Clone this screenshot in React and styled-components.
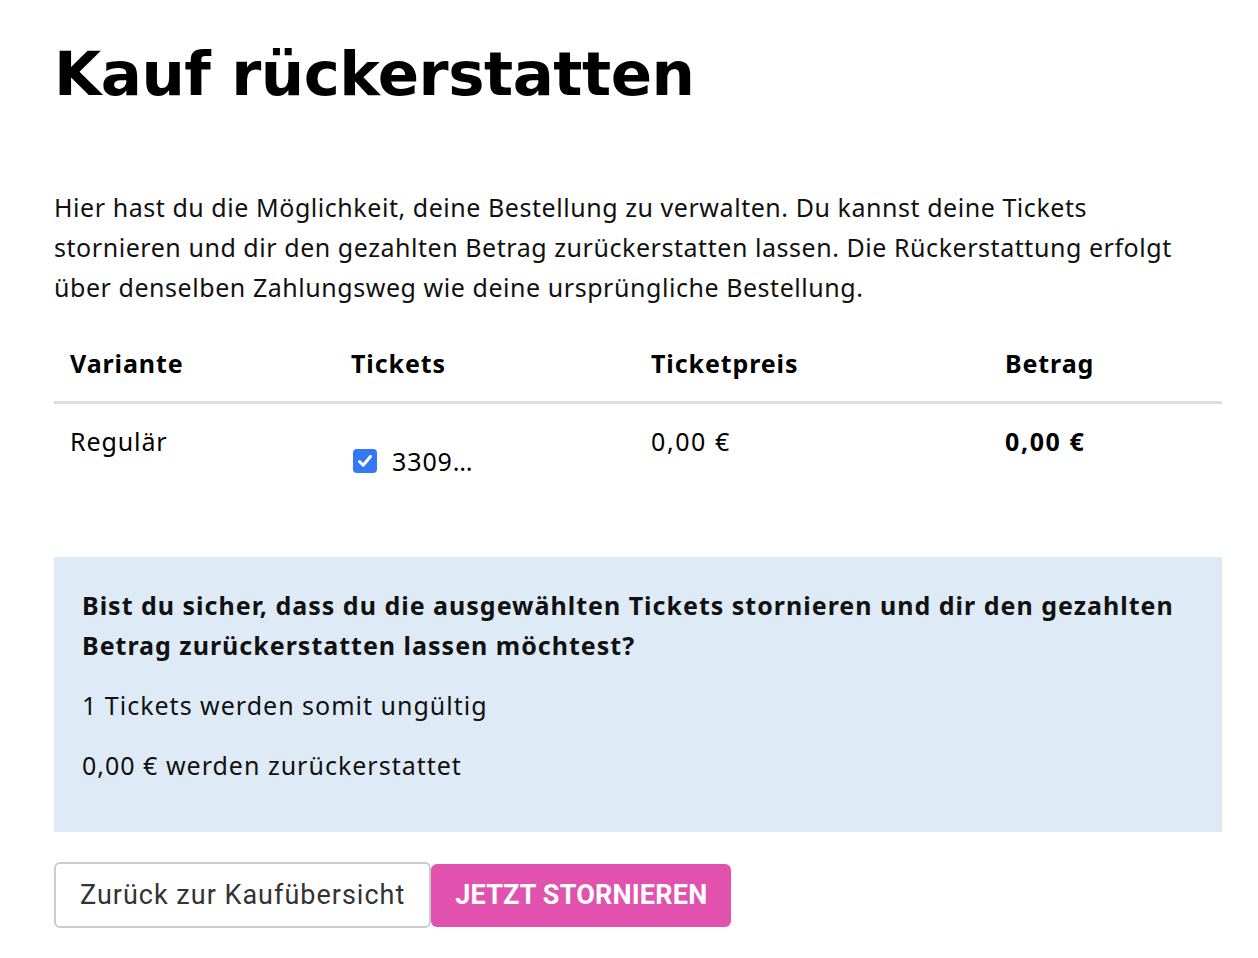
import React, { useState } from "react";
import styled, { createGlobalStyle } from "styled-components";

const Global = createGlobalStyle`
	body {
		margin: 0;
		background: #fff;
		font-family: "Noto Sans", "Lato", sans-serif;
		color: #111;
	}
`;

const Page = styled.div`
	padding: 30px 36px 40px 54px;
	max-width: 1168px;
`;

const Title = styled.h1`
	margin: 0 0 69px;
	font-family: "DejaVu Sans", "Liberation Sans", sans-serif;
	font-weight: 700;
	font-size: 61px;
	line-height: 88px;
	letter-spacing: -0.5px;
	color: #000;
`;

const Intro = styled.p`
	margin: 0 0 18px;
	max-width: 1164px;
	font-size: 25px;
	line-height: 40px;
	letter-spacing: 0.55px;
	color: #111;
`;

const Table = styled.table`
	width: 100%;
	border-collapse: collapse;
	font-size: 25px;
	letter-spacing: 0.9px;
	color: #000;

	th {
		text-align: left;
		font-weight: 700;
		padding: 18px 16px;
		line-height: 40px;
		border-bottom: 3px solid #dddddd;
	}

	td {
		vertical-align: top;
		padding: 17px 16px 16px;
		line-height: 40px;
	}
`;

const Col = styled.col`
	width: ${(p) => p.w}px;
`;

const Price = styled.td`
	font-weight: ${(p) => (p.bold ? 700 : 400)};
	letter-spacing: 1.6px;
`;

const TicketLabel = styled.label`
	display: flex;
	align-items: center;
	gap: 15px;
	margin-top: 20px;
	padding-left: 2px;
	cursor: pointer;
`;

const Box = styled.span`
	width: 24px;
	height: 24px;
	border-radius: 4px;
	background: ${(p) => (p.checked ? "#3478f6" : "#fff")};
	border: ${(p) => (p.checked ? "none" : "1px solid #888")};
	display: flex;
	align-items: center;
	justify-content: center;
`;

const Alert = styled.div`
	margin-top: 60px;
	background: #deebf7;
	padding: 28px 28px 27px;
	font-size: 25px;
	line-height: 40px;
	letter-spacing: 1px;
	color: #111;

	p {
		margin: 0 0 20px;
	}
`;

const Question = styled.p`
	font-weight: 700;
`;

const Actions = styled.div`
	display: flex;
	align-items: center;
	margin-top: 30px;
`;

const Button = styled.button`
	font-family: "Roboto", "Liberation Sans", sans-serif;
	font-size: 27px;
	border-radius: 6px;
	cursor: pointer;
	padding: 0 24px;
	height: ${(p) => (p.primary ? "63px" : "66px")};
	background: ${(p) => (p.primary ? "#e052ae" : "#fff")};
	color: ${(p) => (p.primary ? "#fff" : "#333")};
	border: ${(p) => (p.primary ? "none" : "2px solid #cccccc")};
	font-weight: ${(p) => (p.primary ? 700 : 400)};
	text-transform: ${(p) => (p.primary ? "uppercase" : "none")};
	letter-spacing: ${(p) => (p.primary ? "0.2px" : "1px")};
`;

export default function App() {
	const [checked, setChecked] = useState(true);
	return (
		<Page>
			<Global />
			<Title>Kauf rückerstatten</Title>
			<Intro>
				Hier hast du die Möglichkeit, deine Bestellung zu verwalten. Du kannst deine Tickets
				stornieren und dir den gezahlten Betrag zurückerstatten lassen. Die Rückerstattung erfolgt
				über denselben Zahlungsweg wie deine ursprüngliche Bestellung.
			</Intro>
			<Table>
				<colgroup>
					<Col w={281} />
					<Col w={300} />
					<Col w={354} />
					<Col w={233} />
				</colgroup>
				<thead>
					<tr>
						<th>Variante</th>
						<th>Tickets</th>
						<th>Ticketpreis</th>
						<th>Betrag</th>
					</tr>
				</thead>
				<tbody>
					<tr>
						<td>Regulär</td>
						<td>
							<TicketLabel onClick={() => setChecked(!checked)}>
								<Box checked={checked}>
									{checked && (
										<svg width="18" height="18" viewBox="0 0 18 18">
											<path
												d="M3.5 9.5 L7.2 13.2 L14.5 4.5"
												fill="none"
												stroke="#fff"
												strokeWidth="3"
												strokeLinecap="round"
												strokeLinejoin="round"
											/>
										</svg>
									)}
								</Box>
								3309…
							</TicketLabel>
						</td>
						<Price>0,00 €</Price>
						<Price bold>0,00 €</Price>
					</tr>
				</tbody>
			</Table>
			<Alert>
				<Question>
					Bist du sicher, dass du die ausgewählten Tickets stornieren und dir den gezahlten Betrag
					zurückerstatten lassen möchtest?
				</Question>
				<p>1 Tickets werden somit ungültig</p>
				<p>0,00 € werden zurückerstattet</p>
			</Alert>
			<Actions>
				<Button>Zurück zur Kaufübersicht</Button>
				<Button primary>Jetzt stornieren</Button>
			</Actions>
		</Page>
	);
}
